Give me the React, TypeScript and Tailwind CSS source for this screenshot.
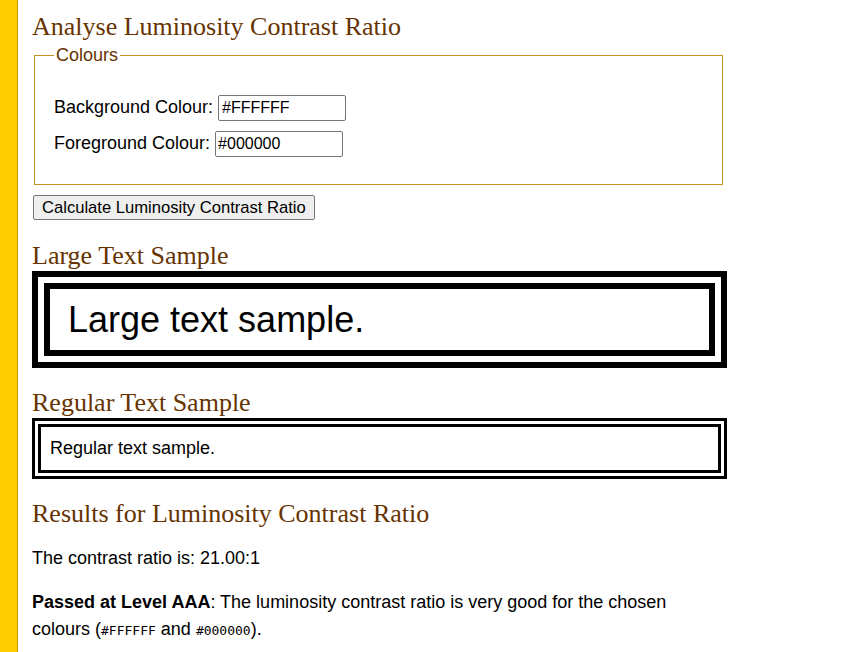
import { useState } from 'react';

const sans = "font-['Liberation_Sans',Arial,sans-serif]";
const serif = "font-['Liberation_Serif','Times_New_Roman',serif]";
const mono = "font-['DejaVu_Sans_Mono',monospace] text-[13px]";

function SectionTitle({ children }: { children: React.ReactNode }) {
    return (
        <h2 className={`${serif} text-[26px] leading-[30px] text-[#663300] font-normal mt-[20px]`}>
            {children}
        </h2>
    );
}

export default function App() {
    const [bg, setBg] = useState('#FFFFFF');
    const [fg, setFg] = useState('#000000');

    return (
        <div className={`flex min-h-screen bg-white ${sans}`}>
            {/* Side strip */}
            <div className="w-[18px] shrink-0 bg-[#FFCC00] border-r border-[#c99a00]" />

            <main className="pl-[14px] w-[709px] text-[18px] leading-[27px] text-black">
                <h1 className={`${serif} text-[26px] leading-[30px] text-[#663300] font-normal mt-[12px]`}>
                    Analyse Luminosity Contrast Ratio
                </h1>

                {/* Colours */}
                <fieldset className="ml-[2px] mr-[4px] border border-[#c29320] px-[19px] pb-[27px]">
                    <legend className="px-[2px] text-[#663300]">Colours</legend>
                    <div className="flex flex-col gap-[9px] pt-[25px]">
                        <div className="flex items-center h-[27px]">
                            <label htmlFor="bg">Background Colour:</label>
                            <input
                                id="bg"
                                value={bg}
                                onChange={(e) => setBg(e.target.value)}
                                className="ml-[5px] w-[128px] h-[26px] border border-[#767676] rounded-[2px] px-[3px] text-[16px] outline-none"
                            />
                        </div>
                        <div className="flex items-center h-[27px]">
                            <label htmlFor="fg">Foreground Colour:</label>
                            <input
                                id="fg"
                                value={fg}
                                onChange={(e) => setFg(e.target.value)}
                                className="ml-[5px] w-[128px] h-[26px] border border-[#767676] rounded-[2px] px-[2px] text-[16px] outline-none"
                            />
                        </div>
                    </div>
                </fieldset>

                <button className="mt-[10px] ml-[1px] h-[25px] px-[8px] bg-[#efefef] border border-[#767676] rounded-[2px] text-[16.6px] leading-[20px] hover:bg-[#e5e5e5]">
                    Calculate Luminosity Contrast Ratio
                </button>

                {/* Samples */}
                <SectionTitle>Large Text Sample</SectionTitle>
                <div className="border-[18px] border-double border-black bg-white pl-[18px] py-[10px] text-[36px] leading-[41px]">
                    Large text sample.
                </div>

                <SectionTitle>Regular Text Sample</SectionTitle>
                <div className="border-[9px] border-double border-black bg-white pl-[9px] py-[11px] text-[18px] leading-[21px]">
                    Regular text sample.
                </div>

                {/* Results */}
                <SectionTitle>Results for Luminosity Contrast Ratio</SectionTitle>
                <p className="mt-[16px]">The contrast ratio is: 21.00:1</p>
                <p className="mt-[17px]">
                    <strong className="font-bold">Passed at Level AAA</strong>
                    <span>: The luminosity contrast ratio is very good for the chosen </span>
                    <span>colours (</span>
                    <code className={mono}>#FFFFFF</code>
                    <span> and </span>
                    <code className={mono}>#000000</code>
                    <span>).</span>
                </p>
            </main>
        </div>
    );
}
